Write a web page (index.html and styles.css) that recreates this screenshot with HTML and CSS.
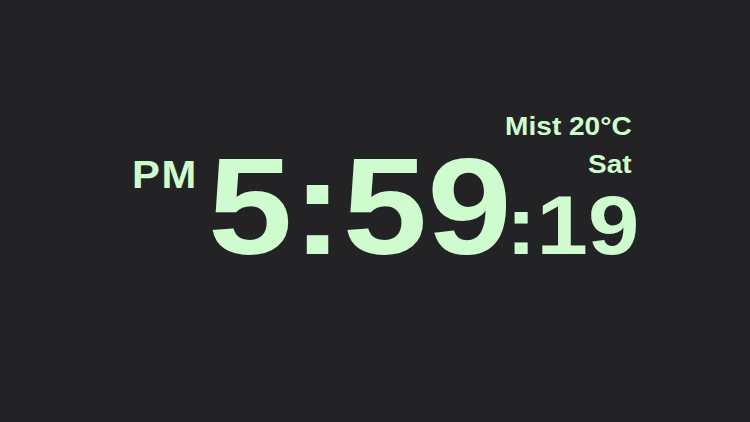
FILE: index.html
```html
<!DOCTYPE html>
<html lang="en">
<head>
<meta charset="utf-8">
<title>Clock</title>
<link rel="stylesheet" href="styles.css">
</head>
<body>
<main class="stage">
  <div class="clock">
    <span class="ampm">PM</span>
    <div class="time"><span class="hm">5:59</span><span class="side"><span class="info">Mist 20°C</span><span class="info">Sat</span><span class="sec">:19</span></span></div>
  </div>
</main>
</body>
</html>
```

FILE: styles.css
```css
html, body {
  margin: 0;
  padding: 0;
  background: #232325;
}
body {
  width: 750px;
  height: 422px;
  overflow: hidden;
  font-family: "Liberation Sans", Arial, sans-serif;
  font-weight: 700;
  color: #cffccf;
}
.stage {
  display: flex;
  justify-content: flex-start;
  padding-top: 107px;
  padding-left: 132px;
}
.clock {
  display: flex;
  align-items: flex-start;
  transform: scaleX(1.1);
  transform-origin: left top;
}
.ampm {
  font-size: 38px;
  line-height: 1;
  letter-spacing: 1.5px;
  margin-top: 49px;
  margin-right: 9px;
}
.time {
  font-size: 138px;
  line-height: 1;
  white-space: nowrap;
}
.side {
  display: inline-block;
  vertical-align: baseline;
  text-align: right;
  margin-left: -6px;
}
.info {
  display: block;
  font-size: 25.5px;
  line-height: 38px;
  margin-right: 7px;
}
.sec {
  display: block;
  font-size: 84px;
  line-height: 1;
}
```
